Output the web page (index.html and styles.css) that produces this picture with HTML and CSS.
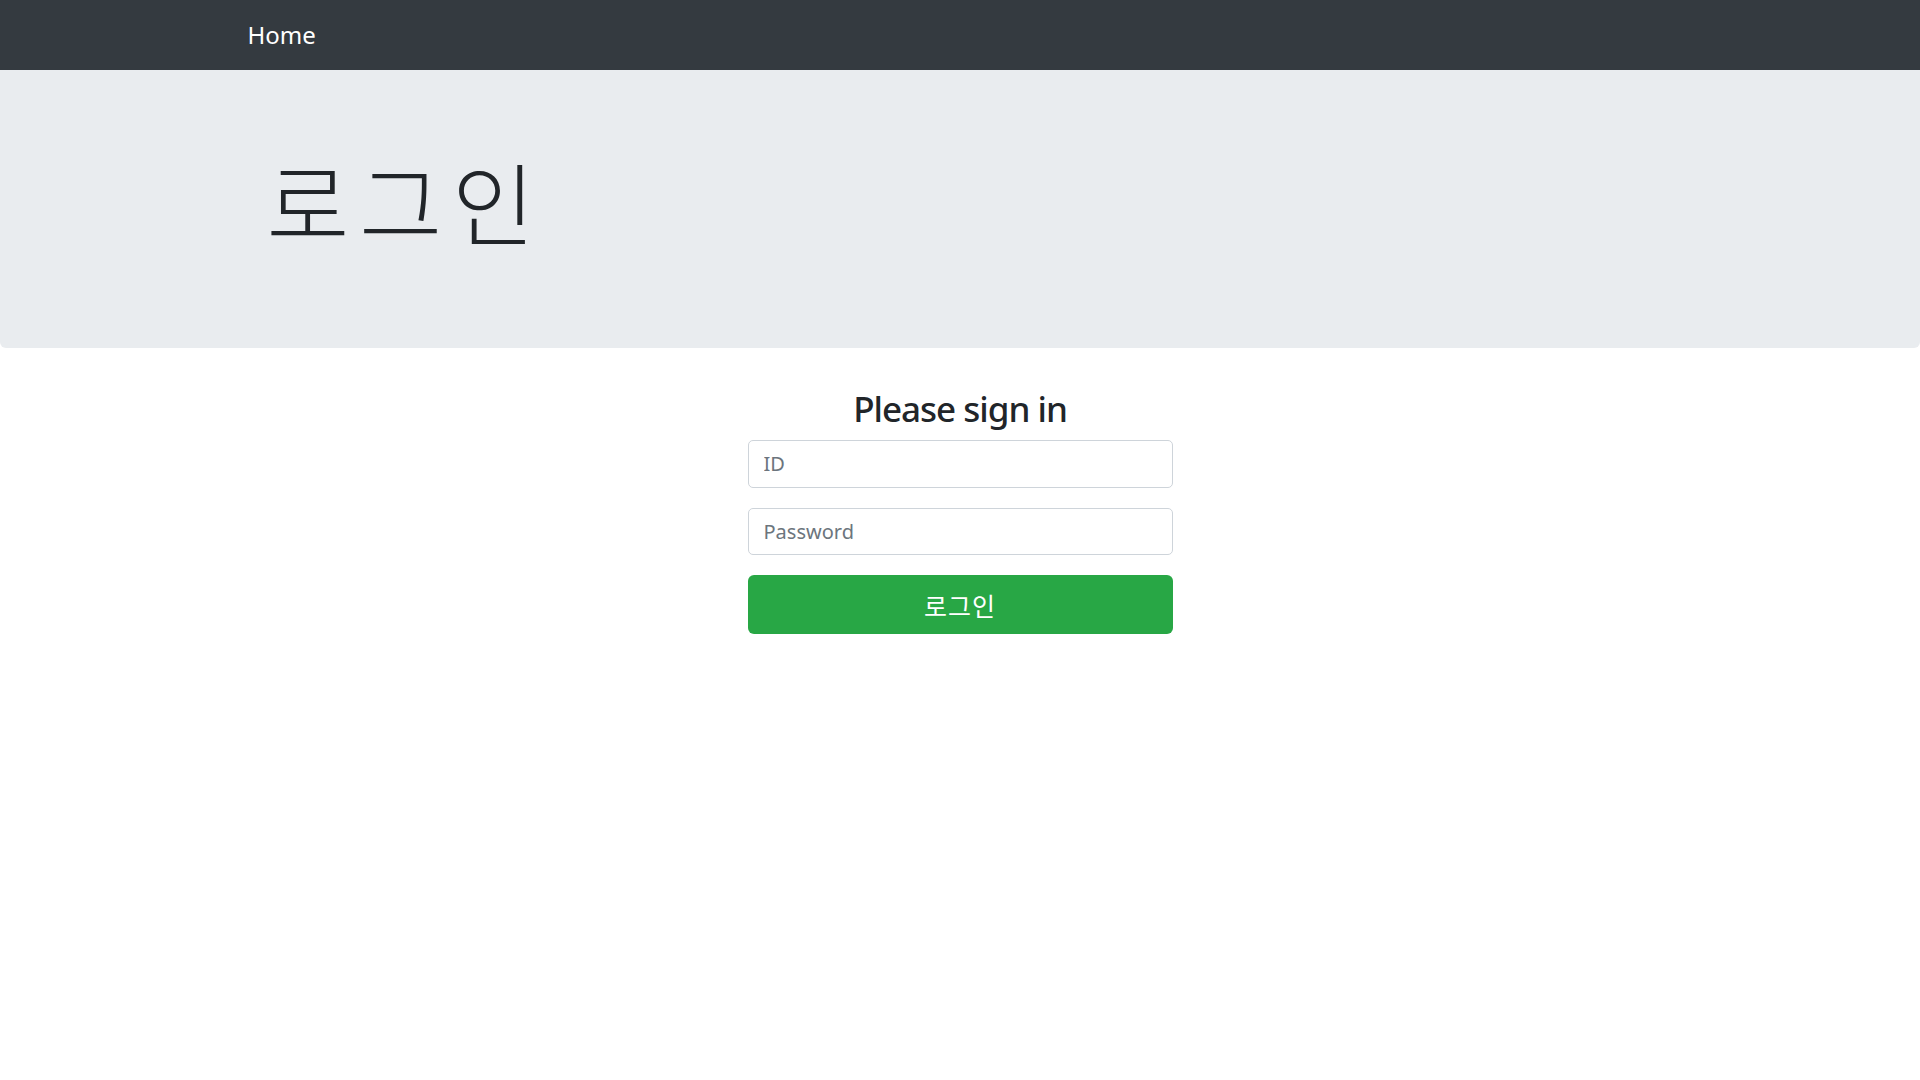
FILE: index.html
```html
<!DOCTYPE html>
<html lang="ko">
<head>
  <meta charset="UTF-8" />
  <meta name="viewport" content="width=device-width, initial-scale=1.0"/>
  <title>로그인</title>
  <link rel="stylesheet" href="styles.css">
</head>
<body>

  <!-- 상단 메뉴 -->
  <nav class="navbar">
    <div class="container">
      <a class="navbar-brand" href="#">Home</a>
    </div>
  </nav>

  <div class="jumbotron">
    <div class="container padded">
      <h1 class="display-3">로그인</h1>
    </div>
  </div>

  <!-- 로그인 폼 -->
  <form class="form-signin">
    <h3 class="form-title">Please sign in</h3>
    <div class="form-group">
      <input type="text" class="form-control" placeholder="ID">
    </div>
    <div class="form-group">
      <input type="password" class="form-control" placeholder="Password">
    </div>
    <button type="submit" class="btn-login">로그인</button>
  </form>

</body>
</html>
```

FILE: styles.css
```css
body {
  margin: 0;
  font-family: "Noto Sans", "Noto Sans CJK KR", sans-serif;
  font-size: 20px;
  color: #212529;
  background: #fff;
}

.container {
  width: 1425px;
  margin: 0 auto;
  box-sizing: border-box;
}

.container.padded {
  padding: 0 19px;
}

/* 상단 메뉴 */
.navbar {
  background: #343a40;
  padding: 10px 20px;
  height: 70px;
  box-sizing: border-box;
}

.navbar-brand {
  display: inline-block;
  color: #fff;
  text-decoration: none;
  font-size: 24px;
  line-height: 37.5px;
  padding: 6px 0;
}

.jumbotron {
  background: #e9ecef;
  padding: 80px 40px;
  margin-bottom: 40px;
  border-radius: 0 0 6px 6px;
}

.display-3 {
  margin: 0 0 10px;
  font-size: 90px;
  font-weight: 300;
  line-height: 1.2;
  letter-spacing: 10px;
}

/* 로그인 폼 */
.form-signin {
  width: 425px;
  margin: 0 auto;
  text-align: center;
}

.form-title {
  margin: 0 0 10px;
  font-size: 35px;
  font-weight: 500;
  line-height: 1.2;
  letter-spacing: -1px;
}

.form-group {
  margin-bottom: 20px;
}

.form-control {
  display: block;
  width: 100%;
  height: 47.5px;
  box-sizing: border-box;
  padding: 7.5px 15px;
  font-family: inherit;
  font-size: 20px;
  color: #495057;
  border: 1px solid #ced4da;
  border-radius: 5px;
  background: #fff;
}

.form-control::placeholder {
  color: #6c757d;
}

.btn-login {
  display: block;
  width: 100%;
  height: 59px;
  border: none;
  border-radius: 6px;
  background: #28a745;
  color: #fff;
  font-family: inherit;
  font-size: 25px;
  letter-spacing: 1px;
  cursor: pointer;
}
```
